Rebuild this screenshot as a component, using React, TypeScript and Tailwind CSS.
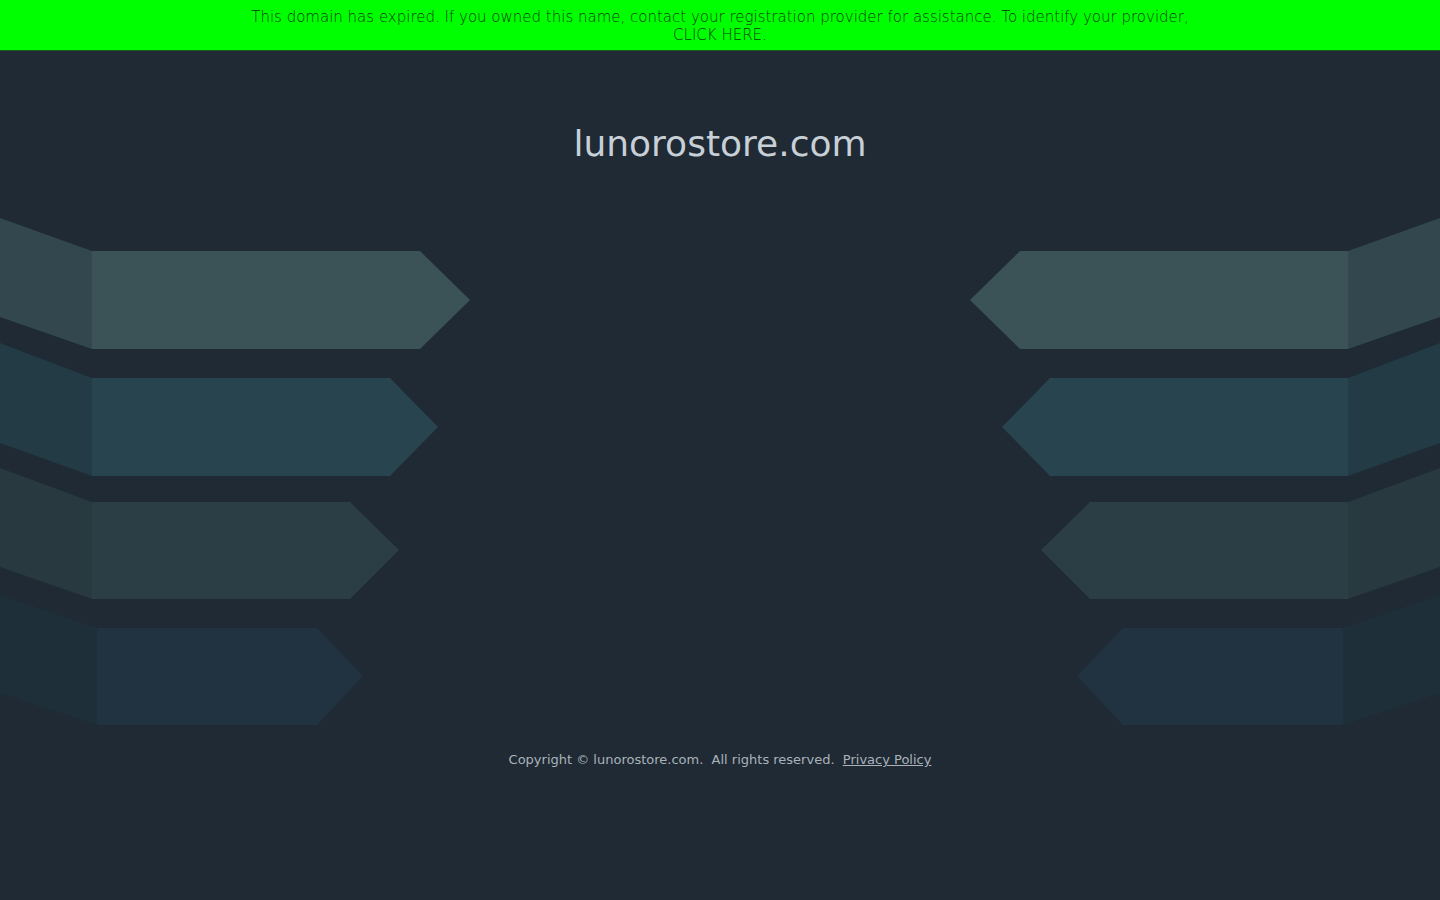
import React from "react";

type Row = { sTop: number; fTop: number; fBot: number; sBot: number; tipStart: number; tip: number; mid: number; sideW: number; front: string; side: string };

const rows: Row[] = [
  { sTop: 218, fTop: 251, fBot: 349, sBot: 317, tipStart: 420, tip: 470, mid: 300, sideW: 92, front: "#3b5357", side: "#32484e" },
  { sTop: 343, fTop: 378, fBot: 476, sBot: 443, tipStart: 390, tip: 438, mid: 427, sideW: 92, front: "#27444f", side: "#233b45" },
  { sTop: 468, fTop: 502, fBot: 599, sBot: 567, tipStart: 350, tip: 399, mid: 550, sideW: 92, front: "#2b3d45", side: "#28393f" },
  { sTop: 595, fTop: 628, fBot: 725, sBot: 693, tipStart: 317, tip: 363, mid: 676, sideW: 97, front: "#213340", side: "#1f2f3a" },
];

function Arrows() {
  return (
    <g>
      {rows.map((r, i) => (
        <g key={i}>
          <polygon points={`0,${r.sTop} ${r.sideW},${r.fTop} ${r.sideW},${r.fBot} 0,${r.sBot}`} fill={r.side} />
          <polygon
            points={`${r.sideW},${r.fTop} ${r.tipStart},${r.fTop} ${r.tip},${r.mid} ${r.tipStart},${r.fBot} ${r.sideW},${r.fBot}`}
            fill={r.front}
          />
        </g>
      ))}
    </g>
  );
}

export default function App() {
  return (
    <div className="min-h-screen bg-[#1f2a35] flex flex-col" style={{ fontFamily: '"DejaVu Sans", sans-serif' }}>
      <div className="h-[51px] bg-[#00ff00] border-b border-[#1a5e1a] flex flex-col items-center pt-[8px] text-[15px] leading-[18px] text-[#0a3a0a] font-light">
        <div>This domain has expired. If you owned this name, contact your registration provider for assistance. To identify your provider,</div>
        <a href="#" className="text-[#0a3a0a]">CLICK HERE.</a>
      </div>
      <h1 className="pt-[71px] text-center text-[36px] leading-[44px] text-[#c7cfd7] font-normal">lunorostore.com</h1>
      <svg className="mt-[46px] block w-[1440px] h-[520px]" viewBox="0 212 1440 520">
        <Arrows />
        <g transform="translate(1440,0) scale(-1,1)">
          <Arrows />
        </g>
      </svg>
      <div className="mt-[19px] text-center text-[13px] leading-[18px] text-[#aab2ba] whitespace-pre">
        {"Copyright © lunorostore.com.  All rights reserved.  "}
        <a href="#" className="underline text-[#aab2ba]">Privacy Policy</a>
      </div>
    </div>
  );
}
